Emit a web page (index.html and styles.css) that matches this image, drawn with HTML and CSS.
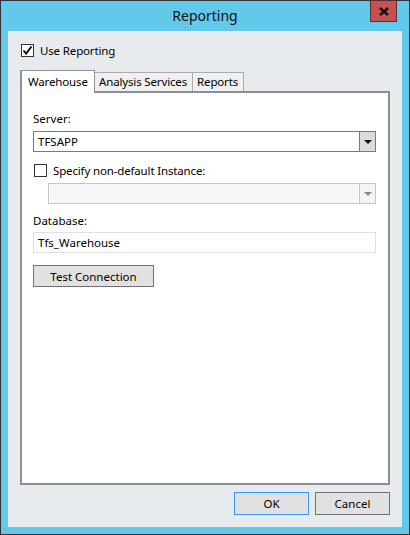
FILE: index.html
```html
<!DOCTYPE html>
<html>
<head>
<meta charset="utf-8">
<link rel="stylesheet" href="styles.css">
</head>
<body>
<div class="window">
  <div class="titlebar">
    <span class="title">Reporting</span>
    <div class="close"><svg width="10" height="9" viewBox="0 0 10 9"><path d="M1 1 L9 8 M9 1 L1 8" stroke="#111" stroke-width="2.4" fill="none"/></svg></div>
  </div>
  <div class="client">
    <label class="check-row">
      <span class="checkbox"><svg width="11" height="11" viewBox="0 0 11 11"><path d="M1.5 5.5 L4.2 8.5 L9.5 1.5" stroke="#000" stroke-width="1.8" fill="none"/></svg></span>
      <span class="check-text">Use Reporting</span>
    </label>
    <div class="tabs">
      <div class="tab selected">Warehouse</div>
      <div class="tab">Analysis Services</div>
      <div class="tab">Reports</div>
    </div>
    <div class="panel">
      <div class="label">Server:</div>
      <div class="combo">
        <span class="combo-text">TFSAPP</span>
        <span class="combo-btn"><span class="arrow"></span></span>
      </div>
      <label class="check-row instance">
        <span class="checkbox"></span>
        <span class="check-text">Specify non-default Instance:</span>
      </label>
      <div class="combo disabled">
        <span class="combo-text"></span>
        <span class="combo-btn"><span class="arrow"></span></span>
      </div>
      <div class="label db">Database:</div>
      <div class="textbox">Tfs_Warehouse</div>
      <div class="button test">Test Connection</div>
    </div>
    <div class="footer">
      <div class="button default">OK</div>
      <div class="button">Cancel</div>
    </div>
  </div>
</div>
</body>
</html>
```
FILE: styles.css
```css
* { box-sizing: border-box; }
html, body { margin: 0; padding: 0; background: #fff; }
body {
  font-family: "Noto Sans", "Open Sans", sans-serif;
  font-size: 11px;
  color: #000;
}
.window {
  position: relative;
  width: 410px;
  height: 535px;
  border: 1px solid #2f3336;
  background: #63c9eb;
  padding: 0 7px 7px 7px;
  display: flex;
  flex-direction: column;
}
.titlebar {
  height: 30px;
  display: flex;
  align-items: center;
  justify-content: center;
}
.title {
  font-size: 14px;
  color: #111;
  margin-top: -2px;
}
.close {
  position: absolute;
  top: -1px;
  right: 12px;
  width: 27px;
  height: 22px;
  background: #c75050;
  border: 1px solid #5c2f2f;
  display: flex;
  align-items: center;
  justify-content: center;
}
.client {
  flex: 1;
  background: #e8ebee;
  padding: 13px 12px 12px 12px;
  display: flex;
  flex-direction: column;
}
.check-row {
  display: flex;
  align-items: center;
  height: 13px;
  margin-left: 1px;
}
.checkbox {
  width: 13px;
  height: 13px;
  border: 1px solid #333;
  background: #fff;
  display: flex;
  align-items: center;
  justify-content: center;
  flex: none;
}
.check-text {
  margin-left: 6px;
  line-height: 13px;
  font-size: 11.5px;
  letter-spacing: -0.15px;
}
.tabs {
  margin-top: 13px;
  height: 21px;
  display: flex;
  align-items: flex-end;
  position: relative;
  z-index: 1;
}
.tab {
  height: 19px;
  border: 1px solid #acacac;
  border-bottom: none;
  border-left: none;
  background: #f0f0f0;
  padding: 0 5px 0 4px;
  line-height: 18px;
  font-size: 11.5px;
  letter-spacing: -0.15px;
}
.tab.selected {
  height: 23px;
  margin-bottom: -2px;
  background: #fff;
  border: 1px solid #8e8f94;
  border-left-width: 2px;
  border-bottom: none;
  padding: 0 7px 0 6px;
  line-height: 21px;
  width: 75px;
}
.panel {
  flex: 1;
  background: #fff;
  border: 2px solid #8e8f94;
  padding: 18px 12px 0 11px;
  display: flex;
  flex-direction: column;
}
.label {
  height: 16px;
  line-height: 16px;
  font-size: 11.5px;
}
.combo {
  margin-top: 4px;
  height: 21px;
  border: 1px solid #7a7a7a;
  background: #fff;
  display: flex;
}
.combo-text {
  flex: 1;
  padding-left: 4px;
  line-height: 19px;
  font-size: 11.5px;
}
.combo-btn {
  width: 16px;
  border-left: 1px solid #7a7a7a;
  background: #dcdcdc;
  display: flex;
  align-items: center;
  justify-content: center;
}
.arrow {
  width: 0;
  height: 0;
  border-left: 4px solid transparent;
  border-right: 4px solid transparent;
  border-top: 4px solid #111;
}
.instance {
  margin-top: 12px;
}
.combo.disabled {
  margin-top: 6px;
  margin-left: 15px;
  height: 21px;
  border-color: #c6c6c6;
  background: #f7f7f7;
}
.combo.disabled .combo-btn {
  border-left-color: #c6c6c6;
  background: #f4f4f4;
}
.combo.disabled .arrow {
  border-top-color: #888;
}
.label.db {
  margin-top: 9px;
}
.textbox {
  margin-top: 3px;
  height: 21px;
  border: 1px solid #e0e0e0;
  padding-left: 4px;
  line-height: 19px;
  font-size: 11.5px;
}
.button {
  width: 75px;
  height: 23px;
  background: #e1e1e1;
  border: 1px solid #707070;
  display: flex;
  align-items: center;
  justify-content: center;
  font-size: 11.5px;
}
.button.test {
  margin-top: 12px;
  width: 121px;
  height: 22px;
}
.button.default {
  border-color: #3399ff;
}
.footer {
  margin-top: 7px;
  display: flex;
  justify-content: flex-end;
  gap: 6px;
}
```
